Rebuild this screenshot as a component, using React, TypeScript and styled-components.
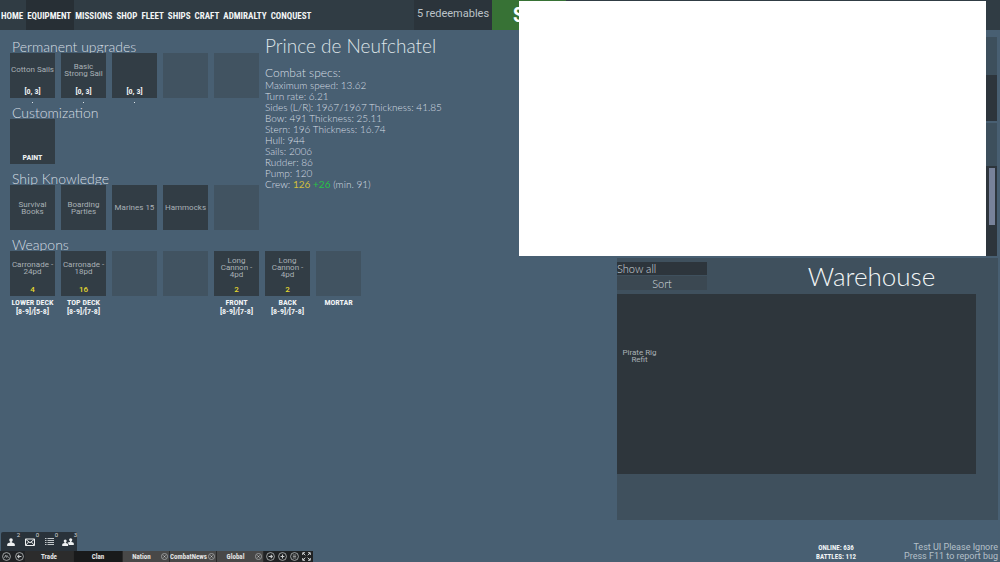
import React from "react";
import styled, { createGlobalStyle } from "styled-components";

const GlobalStyle = createGlobalStyle`
  *, *::before, *::after { box-sizing: border-box; }
  body { margin: 0; background: #485f72; }
  button, select { font: inherit; color: inherit; border: 0; padding: 0; margin: 0; background: none; border-radius: 0; }
  h1, h2, h3, p, ul, dl { margin: 0; padding: 0; font-weight: inherit; }
`;

const round = `"Lato", "Open Sans", sans-serif`;
const plain = `"Roboto", "Liberation Sans", sans-serif`;
const narrow = `"Roboto Condensed", "Open Sans Condensed", "Roboto", sans-serif`;

const Page = styled.div`
  position: relative;
  min-height: 100vh;
  display: flex;
  flex-direction: column;
  overflow: hidden;
  background: #485f72;
  color: #c3ced6;
  font-family: ${plain};
`;

const TopBar = styled.header`
  display: flex;
  height: 30px;
  background: #303c44;
`;

const Nav = styled.nav`
  display: flex;
  flex: 0 0 414px;
`;

const NavButton = styled.button<{ $active?: boolean }>`
  && {
    padding: 1px 3px 0 1px;
    background: ${(p) => (p.$active ? "#272f35" : "transparent")};
    color: #f2f4f5;
    font: 700 9px/30px ${narrow};
    white-space: nowrap;
  }
`;

const Redeem = styled.button`
  && {
    width: 78px;
    background: #2b343b;
    color: #bcc3c8;
    font: 400 11px/28px ${plain};
    padding-bottom: 2px;
  }
`;

const SailButton = styled.button`
  && {
    width: 74px;
    padding-left: 21px;
    background: #377235;
    color: #ffffff;
    text-align: left;
    font: 700 20px/30px ${narrow};
  }
`;

const Main = styled.main`
  flex: 1;
  display: flex;
  justify-content: space-between;
`;

const Loadout = styled.div`
  padding: 2px 0 0 10px;
`;

const LoadoutTop = styled.div`
  display: flex;
  gap: 6px;
`;

const SectionTitle = styled.h2`
  height: 21px;
  padding-left: 2px;
  font: 300 14px/30px ${round};
  color: #d6dee3;
`;

const Slots = styled.div`
  display: grid;
  grid-template-columns: repeat(7, 45px);
  gap: 6px;
`;

const NarrowSlots = styled(Slots)`
  grid-template-columns: repeat(5, 45px);
`;

const SlotColumn = styled.div`
  position: relative;
  height: 45px;
`;

const SlotButton = styled.button<{ $filled: boolean }>`
  && {
    width: 45px;
    height: 45px;
    display: flex;
    flex-direction: column;
    background: ${(p) => (p.$filled ? "#323d45" : "#415361")};
  }
`;

const SlotName = styled.span`
  flex: 1;
  width: 100%;
  display: flex;
  align-items: center;
  justify-content: center;
  text-align: center;
  white-space: pre;
  font: 400 8px/7px ${plain};
  color: #a9b1b6;
`;

const SlotRange = styled.span`
  width: 100%;
  height: 12px;
  font: 700 8px/11px ${narrow};
  color: #eceff1;
`;

const SlotCount = styled(SlotRange)`
  font: 500 8px/12px ${plain};
  color: #e6d92e;
`;

const SlotDot = styled.span`
  position: absolute;
  top: 49px;
  left: 22px;
  width: 1px;
  height: 1px;
  background: #dfe5e9;
`;

const SlotCaption = styled.p`
  padding-top: 2px;
  text-align: center;
  white-space: pre;
  font: 700 8px/9px ${narrow};
  color: #f0f3f5;
`;

const Specs = styled.section`
  font-family: ${round};
  font-weight: 300;
  color: #d6dee3;
  white-space: nowrap;
`;

const ShipName = styled.h1`
  font-size: 19px;
  line-height: 28px;
  color: #dde4e8;
`;

const SpecsTitle = styled.h3`
  padding-top: 6px;
  font-size: 12px;
  line-height: 14px;
`;

const SpecLine = styled.p`
  font-size: 10px;
  line-height: 11px;
`;

const Tint = styled.span<{ $tone: string }>`
  color: ${(p) => p.$tone};
  font-weight: 400;
`;

const Side = styled.aside`
  width: 38%;
  min-width: 383px;
  padding: 7px 2px 0 0;
  display: flex;
  flex-direction: column;
`;

const Panel = styled.section<{ $height: number; $top: number }>`
  height: ${(p) => p.$height}px;
  padding-top: ${(p) => p.$top}px;
  margin: 0 1px 2px 0;
  background: #3d4f5c;
`;

const PanelList = styled.div`
  height: 100%;
  padding: 2px 2px 0 0;
  display: flex;
  justify-content: flex-end;
  background: #2d353c;
`;

const Thumb = styled.div`
  width: 6px;
  height: 57px;
  background: #78829a;
`;

const Warehouse = styled.section`
  height: 262px;
  background: #3f505d;
`;

const WarehouseHead = styled.div`
  display: flex;
  height: 36px;
  padding-top: 4px;
`;

const Filters = styled.div`
  width: 90px;
  font: 300 11px/13px ${round};
  color: #d4dade;
`;

const FilterSelect = styled.select`
  && {
    display: block;
    width: 100%;
    height: 13px;
    appearance: none;
    background: #2d353c;
  }
`;

const SortButton = styled.button`
  && {
    display: block;
    width: 100%;
    height: 14px;
    margin-top: 1px;
    background: #3b4852;
  }
`;

const WarehouseTitle = styled.h2`
  flex: 1;
  padding-left: 38px;
  text-align: center;
  font: 300 26px/29px ${round};
  color: #f2f5f6;
`;

const Stock = styled.div`
  height: 180px;
  margin-right: 22px;
  padding-top: 39px;
  background: #2e363c;
`;

const StockItem = styled.button`
  && {
    width: 45px;
    height: 45px;
    display: flex;
  }
`;

const Footer = styled.footer`
  display: flex;
  justify-content: space-between;
  align-items: flex-end;
`;

const Chat = styled.div`
  width: 313px;
`;

const ChatIcons = styled.div`
  display: flex;
  width: 76px;
  height: 19px;
  margin-left: 1px;
  border-radius: 2px 2px 0 0;
  background: #29323a;
`;

const ChatIcon = styled.button`
  && {
    position: relative;
    width: 19px;
    height: 19px;
    display: grid;
    place-items: center;
    padding-left: 1px;
    color: #eef0f1;
  }
`;

const Count = styled.span`
  position: absolute;
  top: 0;
  right: 0;
  font: 400 6px/6px ${plain};
  color: #d3d8db;
`;

const ChatBar = styled.div`
  display: flex;
  align-items: center;
  height: 11px;
  background: #202224;
  color: #e4e4e4;
`;

const ChatTab = styled.div<{ $tone: string }>`
  display: flex;
  align-items: center;
  justify-content: space-between;
  width: ${(p) => (p.$tone === "#484848" ? 47 : 49)}px;
  height: 11px;
  border-right: 1px solid #2a2a2a;
  background: ${(p) => p.$tone};
`;

const TabLabel = styled.button`
  && {
    flex: 1;
    height: 11px;
    font: 700 7px/12px ${narrow};
    white-space: nowrap;
  }
`;

const RoundButton = styled.button<{ $size: number }>`
  && {
    width: ${(p) => p.$size}px;
    height: 11px;
    flex: none;
    display: grid;
    place-items: center;
  }
`;

const FooterInfo = styled.div`
  width: 184px;
  display: flex;
  align-items: flex-end;
  justify-content: space-between;
  padding-right: 2px;
  white-space: nowrap;
`;

const Online = styled.p`
  font: 700 7px/9px ${narrow};
  text-align: center;
  color: #f1f4f6;
`;

const Notice = styled.p`
  font: 400 9px/9px ${plain};
  text-align: right;
  padding-bottom: 1px;
  color: #b5c0c9;
`;

const Cover = styled.div`
  position: absolute;
  top: 1px;
  right: 14px;
  width: 467px;
  height: 255px;
  background: #ffffff;
`;

type Slot = { name?: string; range?: string; count?: string; caption?: string; dot?: boolean; filled?: boolean };

const upgrades: Slot[] = [
  { name: "Cotton Sails", range: "[0, 3]", dot: true, filled: true },
  { name: "Basic\nStrong Sail", range: "[0, 3]", dot: true, filled: true },
  { name: "", range: "[0, 3]", dot: true, filled: true },
  {},
  {},
];
const custom: Slot[] = [{ name: "", range: "PAINT", filled: true }];
const knowledge: Slot[] = [
  { name: "Survival\nBooks", filled: true },
  { name: "Boarding\nParties", filled: true },
  { name: "Marines 15", filled: true },
  { name: "Hammocks", filled: true },
  {},
];
const weapons: Slot[] = [
  { name: "Carronade -\n24pd", count: "4", caption: "LOWER DECK\n[8-9]/[5-8]", filled: true },
  { name: "Carronade -\n18pd", count: "16", caption: "TOP DECK\n[8-9]/[7-8]", filled: true },
  {},
  {},
  { name: "Long\nCannon -\n4pd", count: "2", caption: "FRONT\n[8-9]/[7-8]", filled: true },
  { name: "Long\nCannon -\n4pd", count: "2", caption: "BACK\n[8-9]/[7-8]", filled: true },
  { caption: "MORTAR" },
];

const nav = ["HOME", "EQUIPMENT", "MISSIONS", "SHOP", "FLEET", "SHIPS", "CRAFT", "ADMIRALTY", "CONQUEST"];

const specs = [
  "Maximum speed: 13.62",
  "Turn rate: 6.21",
  "Sides (L/R): 1967/1967 Thickness: 41.85",
  "Bow: 491 Thickness: 25.11",
  "Stern: 196 Thickness: 16.74",
  "Hull: 944",
  "Sails: 2006",
  "Rudder: 86",
  "Pump: 120",
];

function SlotItem({ slot }: { slot: Slot }) {
  return (
    <SlotColumn>
      <SlotButton $filled={!!slot.filled} aria-label={slot.name || slot.range || "Empty slot"}>
        {slot.name !== undefined && <SlotName>{slot.name}</SlotName>}
        {slot.range && <SlotRange>{slot.range}</SlotRange>}
        {slot.count && <SlotCount>{slot.count}</SlotCount>}
      </SlotButton>
      {slot.dot && <SlotDot />}
      {slot.caption && <SlotCaption>{slot.caption}</SlotCaption>}
    </SlotColumn>
  );
}

function SlotSection({ title, slots, wide }: { title: string; slots: Slot[]; wide?: boolean }) {
  const Grid = wide ? Slots : NarrowSlots;
  return (
    <section>
      <SectionTitle>{title}</SectionTitle>
      <Grid>
        {slots.map((s, i) => (
          <SlotItem key={i} slot={s} />
        ))}
      </Grid>
    </section>
  );
}

const glyphs: Record<string, React.ReactNode> = {
  rename: <path d="M2.800 7 4.600 4l1.200 3M6 4l2 3" />,
  back: <path d="M7.8 5.5H3.4M5.2 3.6 3.3 5.5l1.9 1.9" />,
  close: <path d="m4 4 3 3M7 4 4 7" />,
  next: <path d="M3.2 5.5h4.4M5.8 3.6l1.9 1.9-1.9 1.9" />,
  add: <path d="M5.5 3.2v4.6M3.2 5.5h4.6" />,
  list: <path d="M3.400 3.700h4.200M3.400 5.500h4.200M3.400 7.300h4.200" strokeWidth="0.8" />,
};

function Ring({ kind, size, label }: { kind: string; size: number; label: string }) {
  const d = kind === "close" ? 7 : 9;
  return (
    <RoundButton $size={size} aria-label={label}>
      <svg width={d} height={d} viewBox="0 0 11 11" fill="none" stroke="#c9cccd">
        <circle cx="5.5" cy="5.5" r="4.800" strokeWidth="0.9" />
        <g strokeWidth={kind === "rename" ? 0.9 : 1.3}>{glyphs[kind]}</g>
      </svg>
    </RoundButton>
  );
}

const Person = () => (
  <svg width="8" height="8" viewBox="0 0 8 8" fill="currentColor">
    <circle cx="4" cy="2.1" r="1.8" />
    <path d="M3.2 3.2h1.6v1.3C6.5 4.8 7.8 5.3 7.8 6.3V8H.2V6.3c0-1 1.3-1.5 3-1.8Z" />
  </svg>
);
const Mail = () => (
  <svg width="10" height="8" viewBox="0 0 10 8" fill="none" stroke="currentColor" strokeWidth="1">
    <path d="M.5 1h9v6.500h-9ZM.7 1.300 5 4.800l4.300-3.500M.7 7.200l3-3.300M9.300 7.200l-3-3.300" />
  </svg>
);
const ListIcon = () => (
  <svg width="9" height="8" viewBox="0 0 9 8" stroke="#c2c7ca" strokeWidth="1">
    <path d="M0 .5h1.500M2.500.5H9M0 2.500h1.500M2.500 2.500H9M0 4.500h1.500M2.500 4.500H9M0 6.500h1.500M2.500 6.500H9" />
  </svg>
);
const People = () => (
  <svg width="12" height="8" viewBox="0 0 12 8" fill="currentColor">
    <circle cx="3.2" cy="3" r="1.5" />
    <path d="M2.6 4h1.2v1c1.4.3 2.3.7 2.3 1.5V8H.2V6.500c0-.8 1-1.200 2.400-1.500Z" />
    <circle cx="8.700" cy="1.800" r="1.600" />
    <path d="M8 3h1.400v1c1.500.3 2.400.8 2.400 1.600V7H6.800C6.700 5.900 6.300 5.300 5.500 4.800 6 4.400 7 4.200 8 4Z" />
  </svg>
);

export default function App() {
  return (
    <Page>
      <GlobalStyle />
      <TopBar>
        <Nav>
          {nav.map((n) => (
            <NavButton key={n} $active={n === "EQUIPMENT"}>
              {n}
            </NavButton>
          ))}
        </Nav>
        <Redeem>5 redeemables</Redeem>
        <SailButton>S</SailButton>
      </TopBar>
      <Main>
        <Loadout>
          <LoadoutTop>
            <div>
              <SlotSection title="Permanent upgrades" slots={upgrades} />
              <SlotSection title="Customization" slots={custom} />
              <SlotSection title="Ship Knowledge" slots={knowledge} />
            </div>
            <Specs>
              <ShipName>Prince de Neufchatel</ShipName>
              <SpecsTitle>Combat specs:</SpecsTitle>
              {specs.map((s) => (
                <SpecLine key={s}>{s}</SpecLine>
              ))}
              <SpecLine>
                Crew: <Tint $tone="#d2bf3c">126</Tint> <Tint $tone="#27c445">+26</Tint> (min. 91)
              </SpecLine>
            </Specs>
          </LoadoutTop>
          <SlotSection title="Weapons" slots={weapons} wide />
        </Loadout>
        <Side>
          <Panel $height={84} $top={38}>
            <PanelList />
          </Panel>
          <Panel $height={133} $top={43}>
            <PanelList>
              <Thumb />
            </PanelList>
          </Panel>
          <Warehouse>
            <WarehouseHead>
              <Filters>
                <FilterSelect aria-label="Filter">
                  <option>Show all</option>
                </FilterSelect>
                <SortButton>Sort</SortButton>
              </Filters>
              <WarehouseTitle>Warehouse</WarehouseTitle>
            </WarehouseHead>
            <Stock>
              <StockItem>
                <SlotName>{"Pirate Rig\nRefit"}</SlotName>
              </StockItem>
            </Stock>
          </Warehouse>
        </Side>
      </Main>
      <Footer>
        <Chat>
          <ChatIcons>
            <ChatIcon aria-label="Friends"><Person /><Count>2</Count></ChatIcon>
            <ChatIcon aria-label="Mail"><Mail /><Count>0</Count></ChatIcon>
            <ChatIcon aria-label="Log"><ListIcon /><Count>0</Count></ChatIcon>
            <ChatIcon aria-label="Group"><People /><Count>3</Count></ChatIcon>
          </ChatIcons>
          <ChatBar>
            <Ring kind="rename" size={13} label="Settings" />
            <Ring kind="back" size={12} label="Previous tab" />
            <ChatTab $tone="#2c2c2c"><TabLabel>Trade</TabLabel></ChatTab>
            <ChatTab $tone="#191a1b"><TabLabel>Clan</TabLabel></ChatTab>
            {["Nation", "CombatNews", "Global"].map((t) => (
              <ChatTab key={t} $tone="#484848">
                <TabLabel>{t}</TabLabel>
                <Ring kind="close" size={9} label={`Close ${t}`} />
              </ChatTab>
            ))}
            <Ring kind="next" size={12} label="Next tab" />
            <Ring kind="add" size={12} label="Add tab" />
            <Ring kind="list" size={12} label="Tab list" />
            <RoundButton $size={12} aria-label="Expand">
              <svg width="9" height="9" viewBox="0 0 9 9" fill="none" stroke="#c9cccd" strokeWidth="1">
                <path d="M.7 3V.7H3M6 .7h2.300V3M8.300 6v2.300H6M3 8.300H.7V6M1 1l2.300 2.300M8 1 5.700 3.300M8 8 5.700 5.700M1 8l2.300-2.300" />
              </svg>
            </RoundButton>
          </ChatBar>
        </Chat>
        <FooterInfo>
          <Online>
            ONLINE: 636
            <br />
            BATTLES: 112
          </Online>
          <Notice>
            Test UI Please Ignore
            <br />
            Press F11 to report bug
          </Notice>
        </FooterInfo>
      </Footer>
      <Cover />
    </Page>
  );
}
